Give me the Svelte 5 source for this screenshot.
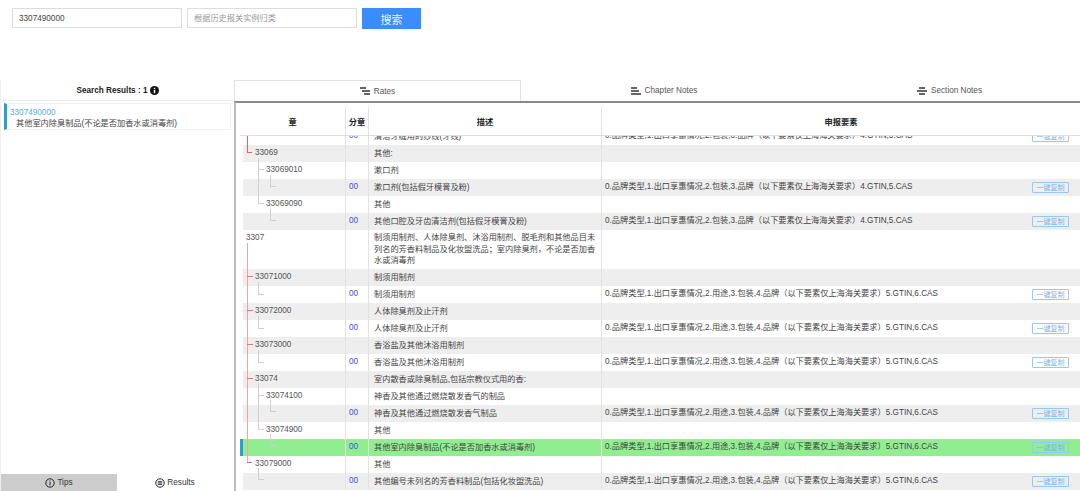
<script>
	const specA = '0.品牌类型,1.出口享惠情况,2.包装,3.品牌（以下要素仅上海海关要求）4.GTIN,5.CAS';
	const specB = '0.品牌类型,1.出口享惠情况,2.用途,3.包装,4.品牌（以下要素仅上海海关要求）5.GTIN,6.CAS';

	const rows = [
		{ desc: '清洁牙缝用的纱线(牙线)', sub: '00', spec: specA },
		{ code: '33069', level: 1, desc: '其他:' },
		{ code: '33069010', level: 2, desc: '漱口剂' },
		{ desc: '漱口剂(包括假牙模膏及粉)', sub: '00', spec: specA },
		{ code: '33069090', level: 2, desc: '其他' },
		{ desc: '其他口腔及牙齿清洁剂(包括假牙模膏及粉)', sub: '00', spec: specA },
		{ code: '3307', level: 0, tall: true, desc: '制须用制剂、人体除臭剂、沐浴用制剂、脱毛剂和其他品目未列名的芳香料制品及化妆盥洗品；室内除臭剂，不论是否加香水或消毒剂' },
		{ code: '33071000', level: 1, desc: '制须用制剂' },
		{ desc: '制须用制剂', sub: '00', spec: specB },
		{ code: '33072000', level: 1, desc: '人体除臭剂及止汗剂' },
		{ desc: '人体除臭剂及止汗剂', sub: '00', spec: specB },
		{ code: '33073000', level: 1, desc: '香浴盐及其他沐浴用制剂' },
		{ desc: '香浴盐及其他沐浴用制剂', sub: '00', spec: specB },
		{ code: '33074', level: 1, desc: '室内散香或除臭制品,包括宗教仪式用的香:' },
		{ code: '33074100', level: 2, desc: '神香及其他通过燃烧散发香气的制品' },
		{ desc: '神香及其他通过燃烧散发香气制品', sub: '00', spec: specB },
		{ code: '33074900', level: 2, desc: '其他' },
		{ desc: '其他室内除臭制品(不论是否加香水或消毒剂)', sub: '00', spec: specB, active: true },
		{ code: '33079000', level: 1, desc: '其他' },
		{ desc: '其他编号未列名的芳香料制品(包括化妆盥洗品)', sub: '00', spec: specB }
	];

	// tree connector lines, coordinates relative to the table's top left corner (240,136)
	const red = [
		[7.5, 0, 7.5, 16, '#e4606a'],
		[7, 16.5, 12, 16.5, '#e4606a'],
		[7.5, 107, 7.5, 326, '#f3a3a6'],
		[7, 140.5, 13, 140.5, '#ea7478'],
		[7, 174.5, 13, 174.5, '#ea7478'],
		[7, 208.5, 13, 208.5, '#ea7478'],
		[7, 242.5, 13, 242.5, '#ea7478'],
		[7, 326.5, 12, 326.5, '#e4606a']
	];
	const gray = [
		[18.5, 22, 18.5, 67],
		[18, 33.5, 24, 33.5],
		[18, 67.5, 24, 67.5],
		[30.5, 39, 30.5, 50],
		[30, 50.5, 36, 50.5],
		[30.5, 73, 30.5, 84],
		[30, 84.5, 36, 84.5],
		[18.5, 146, 18.5, 158],
		[18, 158.5, 24, 158.5],
		[18.5, 180, 18.5, 192],
		[18, 192.5, 24, 192.5],
		[18.5, 214, 18.5, 226],
		[18, 226.5, 24, 226.5],
		[18.5, 247, 18.5, 293],
		[18, 259.5, 24, 259.5],
		[18, 293.5, 24, 293.5],
		[30.5, 264, 30.5, 275],
		[30, 275.5, 36, 275.5],
		[30.5, 298, 30.5, 309],
		[30, 309.5, 36, 309.5],
		[18.5, 332, 18.5, 343],
		[18, 343.5, 24, 343.5]
	];
</script>

<div class="page">
	<div class="search">
		<input class="field" value="3307490000" />
		<input class="field" placeholder="根据历史报关实例归类" />
		<button class="go">搜索</button>
	</div>

	<div class="columns">
		<aside class="side">
			<div class="side-title">
				Search Results : 1
				<svg class="info" viewBox="0 0 10 10"><circle cx="5" cy="5" r="5" fill="#111" /><rect x="4.2" y="4.2" width="1.6" height="3.8" fill="#fff" /><rect x="4.2" y="2" width="1.6" height="1.4" fill="#fff" /></svg>
			</div>
			<div class="hit">
				<div class="hit-code">3307490000</div>
				<div class="hit-name">其他室内除臭制品(不论是否加香水或消毒剂)</div>
			</div>
			<div class="side-tabs">
				<div class="side-tab on">
					<svg class="round" viewBox="0 0 10 10"><circle cx="5" cy="5" r="4.2" fill="none" stroke="#222" stroke-width="1" /><rect x="4.5" y="4.2" width="1" height="3.2" fill="#222" /><rect x="4.5" y="2.5" width="1" height="1" fill="#222" /></svg>
					Tips
				</div>
				<div class="side-tab">
					<svg class="round" viewBox="0 0 10 10"><circle cx="5" cy="5" r="4.2" fill="none" stroke="#222" stroke-width="1" /><path d="M2.8 3.6h4.4M2.8 5h4.4M2.8 6.4h4.4" stroke="#222" stroke-width="0.9" /></svg>
					Results
				</div>
			</div>
		</aside>

		<main class="main">
			<nav class="tabs">
				<div class="tab first">
					<svg class="lines" viewBox="0 0 10 8"><path d="M0 1h6M2 4h8M4 7h6" stroke="#333" stroke-width="1.4" /></svg>
					Rates
				</div>
				<div class="tab">
					<svg class="lines" viewBox="0 0 10 8"><path d="M0 1h6M0 4h8M0 7h10" stroke="#333" stroke-width="1.4" /></svg>
					Chapter Notes
				</div>
				<div class="tab last">
					<svg class="lines" viewBox="0 0 10 8"><path d="M2 1h6M0 4h10M2 7h6" stroke="#333" stroke-width="1.4" /></svg>
					Section Notes
				</div>
			</nav>

			<div class="panel">
				<div class="head">
					<div class="th c1">章</div>
					<div class="th c2">分章</div>
					<div class="th c3">描述</div>
					<div class="th c4">申报要素</div>
				</div>
				<div class="body">
					<div class="rows">
						{#each rows as row, i}
							<div class="row" class:odd={i % 2 === 1} class:tall={row.tall} class:active={row.active}>
								<div class="td c1 code" data-level={row.level}>{row.code ?? ''}</div>
								<div class="td c2 sub">{row.sub ?? ''}</div>
								<div class="td c3 desc">{row.desc}</div>
								<div class="td c4 spec">
									{#if row.spec}
										<span class="spec-text">{row.spec}</span>
										<button class="copy">一键复制</button>
									{/if}
								</div>
							</div>
						{/each}
					</div>
					<svg class="tree" width="50" height="355">
						{#each red as [x1, y1, x2, y2, color]}
							<line {x1} {y1} {x2} {y2} stroke={color} stroke-width="1" />
						{/each}
						{#each gray as [x1, y1, x2, y2]}
							<line {x1} {y1} {x2} {y2} stroke="#cfcfcf" stroke-width="1" />
						{/each}
					</svg>
				</div>
			</div>
		</main>
	</div>
</div>

<style>
	:global(body) {
		margin: 0;
		background: #fff;
	}

	.page {
		width: 1080px;
		height: 491px;
		overflow: hidden;
		display: flex;
		flex-direction: column;
		font-family: 'Liberation Sans', 'Noto Sans CJK SC', sans-serif;
		font-size: 8.2px;
		color: #444;
	}

	.search {
		height: 80px;
		flex: none;
		box-sizing: border-box;
		padding: 8px 0 0 12px;
		display: flex;
		align-items: flex-start;
		gap: 5px;
	}

	.field {
		width: 170px;
		height: 20px;
		box-sizing: border-box;
		border: 1px solid #ddd;
		padding: 0 6px;
		font: 8.2px 'Liberation Sans', 'Noto Sans CJK SC', sans-serif;
		color: #444;
		outline: none;
	}

	.field::placeholder {
		color: #999;
	}

	.go {
		width: 59px;
		height: 21px;
		border: none;
		background: #3a8cff;
		color: #e8f2ff;
		font: 11px 'Liberation Sans', 'Noto Sans CJK SC', sans-serif;
	}

	.columns {
		flex: 1;
		display: flex;
		min-height: 0;
	}

	.side {
		width: 234px;
		flex: none;
		display: flex;
		flex-direction: column;
		box-sizing: border-box;
		border-left: 1px solid #eee;
	}

	.side-title {
		height: 21px;
		box-sizing: border-box;
		padding-top: 1px;
		border-bottom: 1px solid #eee;
		display: flex;
		align-items: center;
		justify-content: center;
		gap: 2px;
		font-weight: bold;
		color: #222;
	}

	.info {
		width: 9px;
		height: 9px;
	}

	.hit {
		margin: 2px 3px 0 3px;
		height: 27px;
		box-sizing: border-box;
		border: 1px solid #f0f0f0;
		border-left: 3px solid #2a9fd6;
		padding: 3px 0 0 3px;
	}

	.hit-code {
		color: #5aaede;
		line-height: 11px;
	}

	.hit-name {
		line-height: 11px;
		padding-left: 6px;
	}

	.side-tabs {
		margin-top: auto;
		display: flex;
		height: 17px;
	}

	.side-tab {
		width: 116px;
		display: flex;
		align-items: center;
		justify-content: center;
		gap: 2px;
		color: #333;
	}

	.side-tab.on {
		background: #ccc;
	}

	.round {
		width: 10px;
		height: 10px;
	}

	.main {
		flex: 1;
		min-width: 0;
		display: flex;
		flex-direction: column;
	}

	.tabs {
		height: 21px;
		flex: none;
		display: grid;
		grid-template-columns: 287px 286px 273px;
		color: #555;
	}

	.tab {
		display: flex;
		align-items: center;
		justify-content: center;
		gap: 4px;
	}

	.tab.first {
		border: 1px solid #e2e2e2;
		border-bottom: none;
	}

	.tab.last {
		padding-left: 12px;
	}

	.lines {
		width: 10px;
		height: 8px;
	}

	.panel {
		flex: 1;
		min-height: 0;
		box-sizing: border-box;
		border-top: 2px solid #8a8a8a;
		border-left: 2px solid #bbb;
		padding-left: 4px;
		display: flex;
		flex-direction: column;
	}

	.head {
		height: 33px;
		flex: none;
		box-sizing: border-box;
		border-bottom: 1px solid #ddd;
		padding-top: 4px;
		display: flex;
		font-weight: bold;
		color: #222;
	}

	.th {
		display: flex;
		align-items: center;
		justify-content: center;
		box-sizing: border-box;
		border-right: 1px solid #e2e2e2;
	}

	.c1 {
		width: 106px;
		flex: none;
	}

	.c2 {
		width: 23px;
		flex: none;
	}

	.c3 {
		width: 233px;
		flex: none;
	}

	.c4 {
		flex: 1;
		min-width: 0;
	}

	.th.c4 {
		border-right: none;
	}

	.body {
		flex: 1;
		min-height: 0;
		overflow: hidden;
		position: relative;
	}

	.rows {
		margin-top: -8px;
	}

	.row {
		display: flex;
		height: 17px;
		margin-left: 3px;
		background: #fff;
	}

	.row.odd {
		background: #eee;
	}

	.row.tall {
		height: 39px;
	}

	.row.active {
		background: #90ee90;
		margin-left: 0;
		border-left: 3px solid #2a9fd6;
	}

	.td {
		box-sizing: border-box;
		display: flex;
		align-items: center;
		border-right: 1px solid #e2e2e2;
	}

	.td.c1 {
		width: 103px;
	}

	.td.c4 {
		border-right: none;
		justify-content: space-between;
		padding: 0 11px 0 3px;
	}

	.spec-text {
		line-height: 11px;
		padding-bottom: 2px;
	}

	.code {
		padding-bottom: 2px;
		color: #555;
	}

	.code[data-level='0'] {
		align-items: flex-start;
		padding: 3px 0 0 3px;
	}

	.code[data-level='1'] {
		padding-left: 12px;
	}

	.code[data-level='2'] {
		padding-left: 23px;
	}

	.sub {
		padding-left: 3px;
		padding-bottom: 2px;
		color: #4a4ae6;
	}

	.desc {
		padding: 0 4px 0 5px;
		line-height: 11.5px;
	}

	.copy {
		width: 37px;
		height: 11px;
		box-sizing: border-box;
		padding: 0;
		border: 1px solid #93c9f8;
		border-radius: 1px;
		background: transparent;
		color: #78b4ee;
		font: 7px 'Liberation Sans', 'Noto Sans CJK SC', sans-serif;
		line-height: 9px;
	}

	.tree {
		position: absolute;
		left: 0;
		top: 0;
		pointer-events: none;
	}
</style>
